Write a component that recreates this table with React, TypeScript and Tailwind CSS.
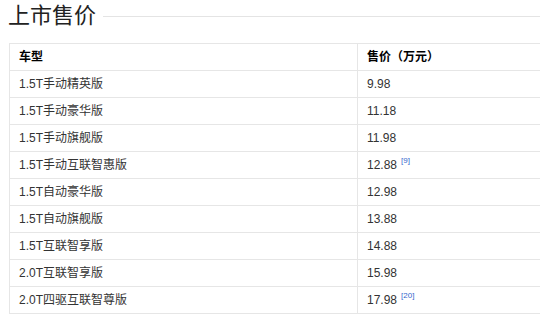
const rows: { name: string; price: string; ref?: string }[] = [
  { name: "1.5T手动精英版", price: "9.98" },
  { name: "1.5T手动豪华版", price: "11.18" },
  { name: "1.5T手动旗舰版", price: "11.98" },
  { name: "1.5T手动互联智惠版", price: "12.88", ref: "[9]" },
  { name: "1.5T自动豪华版", price: "12.98" },
  { name: "1.5T自动旗舰版", price: "13.88" },
  { name: "1.5T互联智享版", price: "14.88" },
  { name: "2.0T互联智享版", price: "15.98" },
  { name: "2.0T四驱互联智尊版", price: "17.98", ref: "[20]" },
];

const App = () => {
  return (
    <div className="w-[540px] h-[317px] overflow-hidden bg-white font-['Liberation_Sans','Noto_Sans_CJK_SC',sans-serif] text-[#333]">
      <div className="flex items-center h-8 pl-[8px]">
        <h2 className="text-[22px] leading-8 text-[#222] pr-[7px]">上市售价</h2>
        <div className="flex-1 h-px bg-[#e4e4e4]" />
      </div>
      <div className="mt-[11px] ml-[9px] w-[531px] border-l border-t border-[#e6e6e6] text-[12px]">
        <div className="flex h-[27px] border-b border-[#e6e6e6] font-bold text-black">
          <div className="w-[348px] pl-[9px] flex items-center border-r border-[#e6e6e6]">车型</div>
          <div className="flex-1 pl-[9px] flex items-center">售价（万元）</div>
        </div>
        {rows.map((r) => (
          <div key={r.name} className="flex h-[27px] border-b border-[#e6e6e6]">
            <div className="w-[348px] pl-[9px] flex items-center border-r border-[#e6e6e6]">{r.name}</div>
            <div className="flex-1 pl-[9px] flex items-center">
              {r.price}
              {r.ref && (
                <sup className="ml-[4px] text-[8px] text-[#3366cc] -top-[4px]">{r.ref}</sup>
              )}
            </div>
          </div>
        ))}
      </div>
    </div>
  );
};

export default App;
